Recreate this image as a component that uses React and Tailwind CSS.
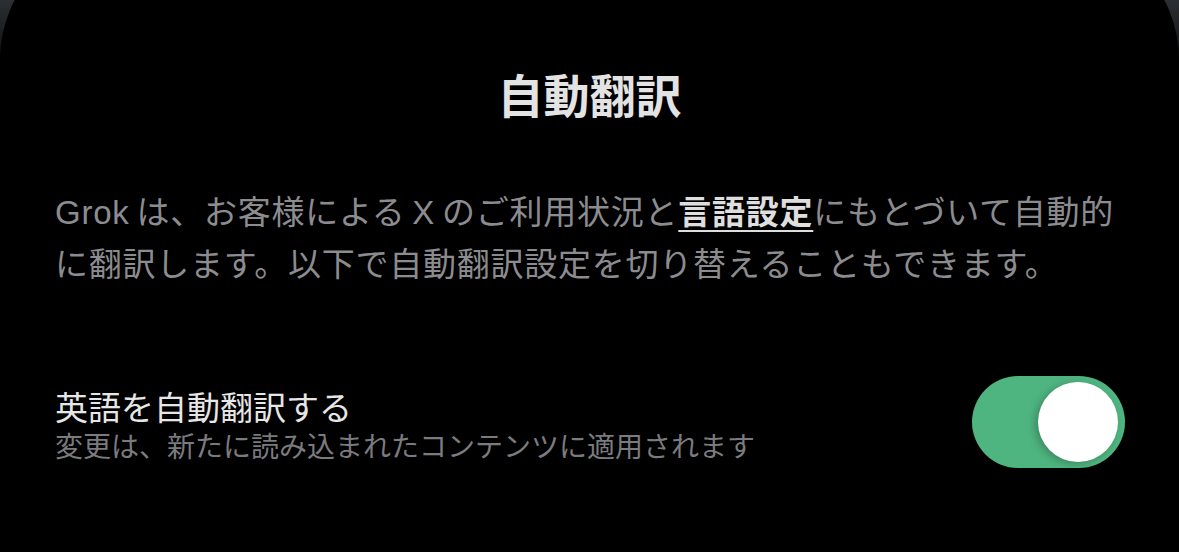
export default function App() {
  const font = { fontFamily: '"Liberation Sans", "Noto Sans CJK JP", sans-serif' };
  return (
    <div
      className="w-[1179px] h-[552px] overflow-hidden bg-[linear-gradient(to_bottom,#2c2f33_0px,#1a1c1f_35px,#000_80px)]"
      style={font}
    >
      <div className="-mt-[70px] h-[680px] rounded-[130px] bg-black pt-[137px] px-[55px]">
        <h1 className="text-center text-[46px] leading-[60px] font-bold text-[#e3e3e3]">
          自動翻訳
        </h1>
        <p className="mt-[60px] text-[33px] leading-[52px] tracking-[0.75px] [word-spacing:-3px] text-[#8c8c90]">
          Grok は、お客様による X のご利用状況と
          <span className="font-bold text-[#dedede] underline decoration-[2px] underline-offset-[6px]">
            言語設定
          </span>
          にもとづいて自動的に翻訳します。以下で自動翻訳設定を切り替えることもできます。
        </p>
        <div className="mt-[85px] flex items-center justify-between">
          <div>
            <div className="text-[33px] leading-[40px] text-[#e6e6e6]">英語を自動翻訳する</div>
            <div className="text-[28px] leading-[38px] text-[#7b7b7f]">
              変更は、新たに読み込まれたコンテンツに適用されます
            </div>
          </div>
          <div className="mr-[-1px] mb-[12px] flex h-[92px] w-[153px] shrink-0 items-center justify-end rounded-full bg-[#4fb580] pr-[7px]">
            <div className="h-[80px] w-[80px] rounded-full bg-white shadow-[-3px_2px_8px_rgba(0,0,0,0.25)]" />
          </div>
        </div>
      </div>
    </div>
  );
}
